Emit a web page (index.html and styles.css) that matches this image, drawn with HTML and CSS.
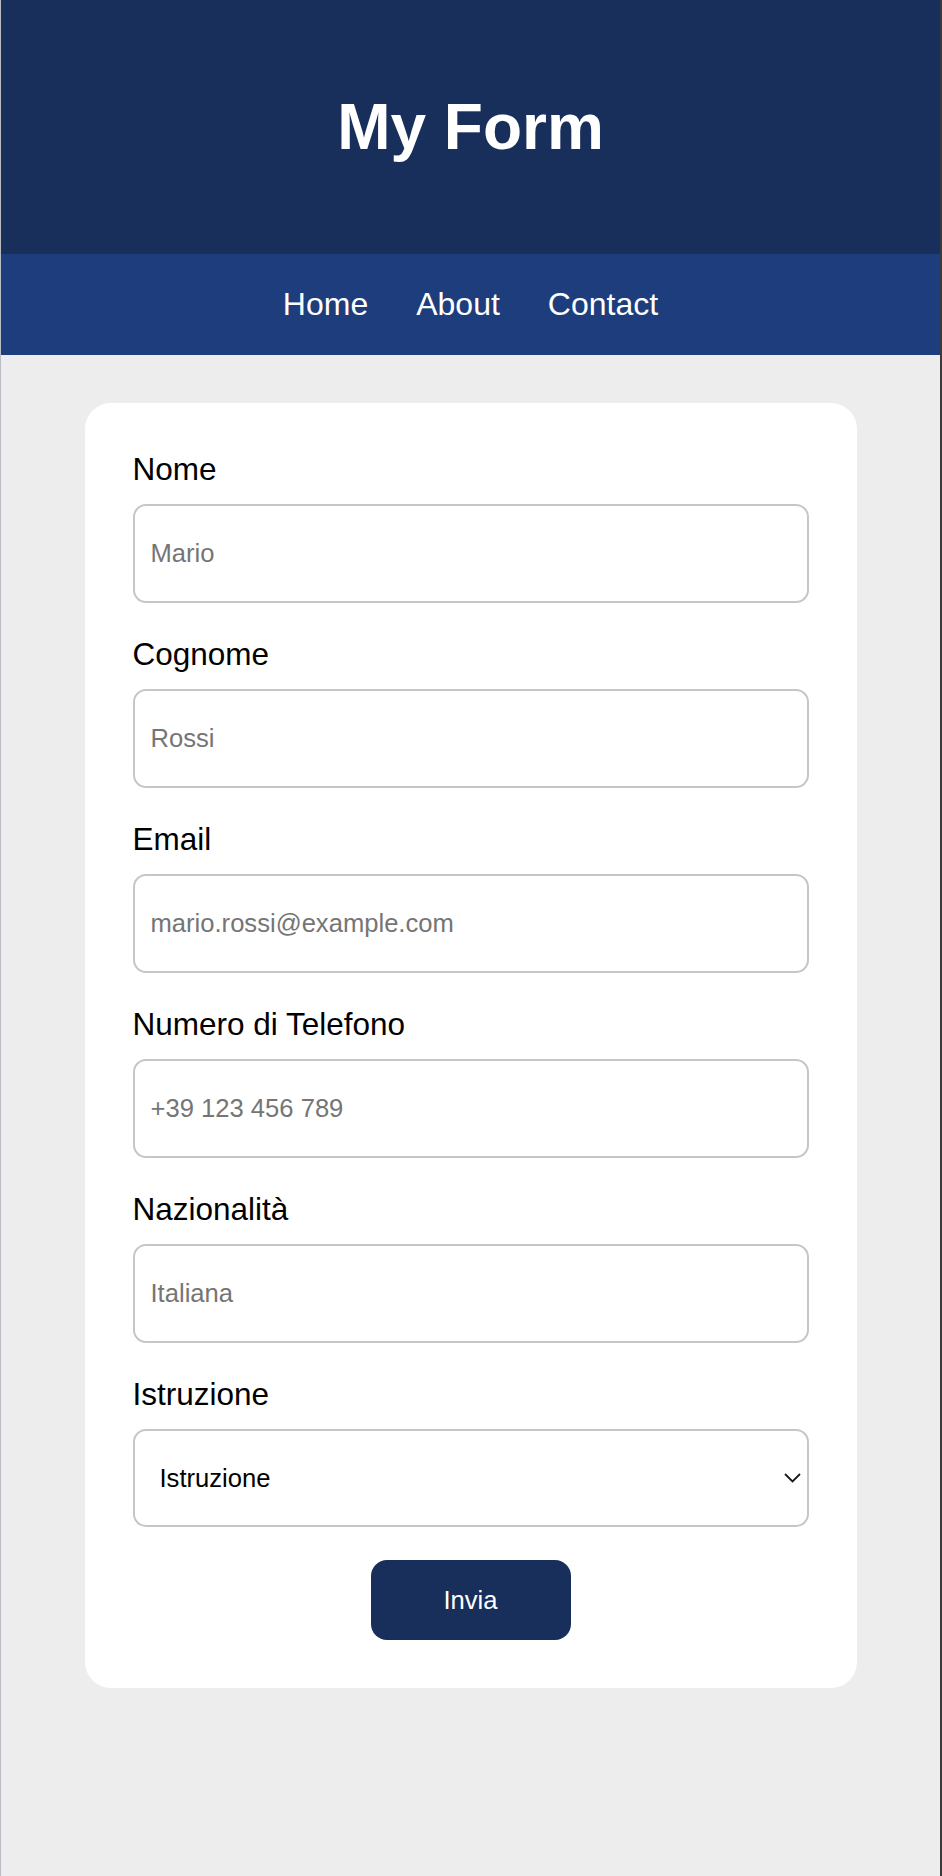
FILE: index.html
```html
<!DOCTYPE html>
<html lang="it">
<head>
<meta charset="utf-8">
<title>My Form</title>
<link rel="stylesheet" href="styles.css">
</head>
<body>
<div class="page">
  <header class="site-header">
    <h1 class="site-title">My Form</h1>
  </header>
  <nav class="site-nav">
    <a href="#" class="nav-link">Home</a>
    <a href="#" class="nav-link">About</a>
    <a href="#" class="nav-link">Contact</a>
  </nav>
  <main class="main">
    <form class="card">
      <div class="field">
        <label class="field-label" for="nome">Nome</label>
        <input class="field-input" id="nome" type="text" placeholder="Mario">
      </div>
      <div class="field">
        <label class="field-label" for="cognome">Cognome</label>
        <input class="field-input" id="cognome" type="text" placeholder="Rossi">
      </div>
      <div class="field">
        <label class="field-label" for="email">Email</label>
        <input class="field-input" id="email" type="email" placeholder="mario.rossi@example.com">
      </div>
      <div class="field">
        <label class="field-label" for="tel">Numero di Telefono</label>
        <input class="field-input" id="tel" type="tel" placeholder="+39 123 456 789">
      </div>
      <div class="field">
        <label class="field-label" for="naz">Nazionalità</label>
        <input class="field-input" id="naz" type="text" placeholder="Italiana">
      </div>
      <div class="field">
        <label class="field-label" for="istr">Istruzione</label>
        <div class="select-wrap">
          <select class="field-select" id="istr">
            <option>Istruzione</option>
            <option>Diploma</option>
            <option>Laurea</option>
          </select>
          <svg class="select-chevron" width="17" height="10" viewBox="0 0 17 10" aria-hidden="true">
            <path d="M1 1 L8.5 8.5 L16 1" fill="none" stroke="#1a1a1a" stroke-width="1.8"/>
          </svg>
        </div>
      </div>
      <div class="actions">
        <button type="submit" class="submit-btn">Invia</button>
      </div>
    </form>
  </main>
</div>
</body>
</html>
```

FILE: styles.css
```css
* {
  box-sizing: border-box;
}

html, body {
  margin: 0;
  padding: 0;
}

body {
  background: #ededed;
  font-family: "Liberation Sans", Arial, Helvetica, sans-serif;
  color: #000;
}

.page {
  min-height: 1876px;
  border-left: 1px solid #b9bcc2;
  border-right: 2px solid #3a3a3a;
  background: #ededed;
}

.site-header {
  background: #182e5b;
  padding: 90px 0;
  text-align: center;
}

.site-title {
  margin: 0;
  font-size: 64px;
  line-height: 74px;
  font-weight: bold;
  color: #fff;
}

.site-nav {
  background: #1d3d7c;
  padding: 32px 0;
  display: flex;
  justify-content: center;
  gap: 48px;
}

.nav-link {
  color: #fff;
  text-decoration: none;
  font-size: 32px;
  line-height: 37px;
}

.main {
  padding-top: 48px;
}

.card {
  width: 772px;
  margin: 0 auto;
  background: #fff;
  border-radius: 26px;
  padding: 48px;
}

.field {
  margin-bottom: 33px;
}

.field-label {
  display: block;
  font-size: 31.5px;
  line-height: 36px;
  margin-bottom: 17px;
}

.field-input,
.field-select {
  display: block;
  width: 100%;
  height: 99px;
  border: 2px solid #c6c6c6;
  border-radius: 13px;
  background: #fff;
  font-family: "Liberation Sans", Arial, Helvetica, sans-serif;
  font-size: 25.6px;
  color: #000;
  outline: none;
  margin: 0;
}

.field-input {
  padding: 0 16px;
}

.field-input::placeholder {
  color: #757575;
  opacity: 1;
}

.select-wrap {
  position: relative;
}

.field-select {
  height: 98px;
  padding: 0 40px 0 25px;
  appearance: none;
  -webkit-appearance: none;
}

.select-chevron {
  position: absolute;
  right: 8px;
  top: 44px;
  pointer-events: none;
}

.actions {
  display: flex;
  justify-content: center;
}

.submit-btn {
  width: 200px;
  height: 80px;
  border: none;
  border-radius: 16px;
  background: #182e5b;
  color: #fff;
  font-family: "Liberation Sans", Arial, Helvetica, sans-serif;
  font-size: 25.6px;
  cursor: pointer;
}
```
